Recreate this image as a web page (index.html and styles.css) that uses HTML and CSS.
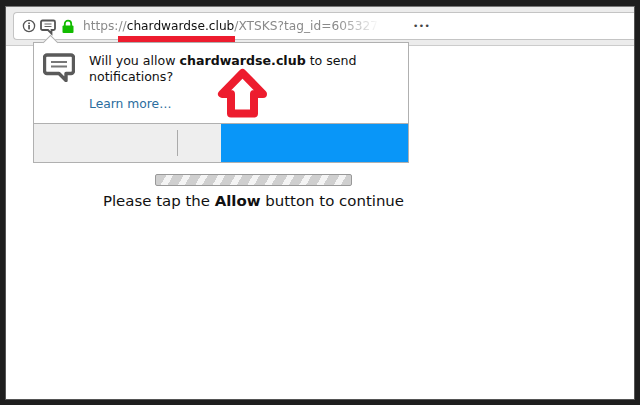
FILE: index.html
```html
<!DOCTYPE html>
<html lang="en">
<head>
    <meta charset="UTF-8">
    <meta name="viewport" content="width=device-width, initial-scale=1.0">
    <title>Notification prompt</title>
    <link rel="stylesheet" href="styles.css">
</head>
<body>
    <div class="window">
        <div class="toolbar">
            <div class="urlbar">
                <svg class="icon-info" width="14" height="14" viewBox="0 0 14 14">
                    <circle cx="7" cy="7" r="5.6" fill="none" stroke="#555" stroke-width="1.3"/>
                    <rect x="6.2" y="6" width="1.7" height="4.4" fill="#555"/>
                    <rect x="6.2" y="3.5" width="1.7" height="1.6" fill="#555"/>
                </svg>
                <svg class="icon-chat" width="16" height="17" viewBox="0 0 16 17">
                    <path d="M2.500 1.500h11a1.500 1.500 0 0 1 1.500 1.500v6.500a1.500 1.500 0 0 1-1.500 1.500h-2v3.500l-3.500-3.500h-5.500a1.500 1.500 0 0 1-1.500-1.500v-6.500a1.500 1.500 0 0 1 1.500-1.500z" fill="#fff" stroke="#555" stroke-width="1.800"/>
                    <path d="M4.500 5h7M4.500 7.500h7" stroke="#666" stroke-width="1.200"/>
                </svg>
                <svg class="icon-lock" width="14" height="15" viewBox="0 0 14 15">
                    <path d="M3.800 7V4.800a3.200 3.200 0 0 1 6.400 0V7" fill="none" stroke="#12bc00" stroke-width="1.800"/>
                    <rect x="1.500" y="6.500" width="11" height="7.500" rx="1" fill="#12bc00"/>
                </svg>
                <div class="url"><span class="url-scheme">https://</span><span class="url-host">chardwardse.club</span><span class="url-path">/XTSKS?tag_id=605327</span></div>
                <div class="more-dots">•••</div>
            </div>
        </div>
        <div class="content">
            <div class="progress"></div>
            <p class="hint">Please tap the <b>Allow</b> button to continue</p>
        </div>

        <div class="red-line"></div>

        <div class="popup">
            <div class="popup-body">
                <svg class="popup-icon" width="32" height="29" viewBox="0 0 32 29">
                    <path d="M4 2h24a2.500 2.500 0 0 1 2.500 2.500v13.500a2.500 2.500 0 0 1-2.500 2.500h-5v7l-7-7h-12a2.500 2.500 0 0 1-2.500-2.500v-13.500a2.500 2.500 0 0 1 2.500-2.500z" fill="#fff" stroke="#5a5a5a" stroke-width="3.400" stroke-linejoin="round"/>
                    <path d="M8 9h16M8 13.500h16" stroke="#777" stroke-width="1.800"/>
                </svg>
                <div class="popup-text">
                    <p class="popup-msg">Will you allow <b>chardwardse.club</b> to send notifications?</p>
                    <a class="learn-more">Learn more…</a>
                </div>
            </div>
            <div class="popup-buttons">
                <div class="btn-block">
                    <span class="btn-divider"></span>
                </div>
                <div class="btn-allow"></div>
            </div>
        </div>

        <svg class="red-arrow" width="52" height="51" viewBox="0 0 52 51">
            <path d="M25.500 5L5 26H14V45.500H37V26H46Z" fill="#fff" stroke="#ed1c2e" stroke-width="8" stroke-linejoin="round"/>
        </svg>
    </div>
</body>
</html>
```

FILE: styles.css
```css
html, body {
    margin: 0;
    height: 100%;
}

body {
    background: #1e1e1e;
    padding: 6px 5px 5px 5px;
    box-sizing: border-box;
    font-family: "DejaVu Sans", sans-serif;
    color: #111;
}

.window {
    position: relative;
    height: 100%;
    background: #fff;
    border-left: 1px solid #555;
    border-top: 1px solid #777;
    border-right: 1px solid #555;
    border-bottom: 1px solid #555;
    box-sizing: border-box;
    overflow: hidden;
}

.toolbar {
    background: #ececec;
    padding: 5px 0 5px 7px;
    border-bottom: 1px solid #ccc;
}

.urlbar {
    display: flex;
    align-items: center;
    height: 26px;
    background: #fff;
    border: 1px solid #c4c4c4;
    border-right: none;
    border-radius: 4px 0 0 4px;
    padding-left: 8px;
}

.icon-info {
    margin-right: 4px;
}

.icon-chat {
    margin: 2px 5px 0 0;
}

.url {
    margin-left: 8px;
    width: 296px;
    font-size: 12.2px;
    white-space: nowrap;
    overflow: hidden;
    -webkit-mask-image: linear-gradient(to right, #000 86%, transparent 100%);
}

.url-scheme, .url-path {
    color: #8a8a8a;
}

.more-dots {
    margin-left: 34px;
    font-size: 9px;
    letter-spacing: 0.5px;
    color: #444;
}

.content {
    width: 495px;
    padding-top: 128px;
    display: flex;
    flex-direction: column;
    align-items: center;
}

.progress {
    width: 195px;
    height: 10px;
    border: 1px solid #999;
    border-radius: 2px;
    background: repeating-linear-gradient(120deg, #cfcfcf 0, #cfcfcf 9px, #f4f4f4 9px, #f4f4f4 15px);
}

.hint {
    margin: 6px 0 0;
    font-size: 14.95px;
    line-height: 19px;
}

.red-line {
    position: absolute;
    left: 112px;
    top: 29px;
    width: 117px;
    height: 8px;
    background: #ed1c2e;
}

.popup {
    position: absolute;
    left: 27px;
    top: 35px;
    width: 374px;
    background: #fff;
    border: 1px solid #b0b0b0;
}

.popup::before {
    content: "";
    position: absolute;
    left: 11px;
    top: -6px;
    width: 10px;
    height: 10px;
    background: #fff;
    border-top: 1px solid #b0b0b0;
    border-left: 1px solid #b0b0b0;
    transform: rotate(45deg);
}

.popup-body {
    display: flex;
    height: 80px;
    padding: 10px 0 0 9px;
    box-sizing: border-box;
}

.popup-icon {
    flex: none;
}

.popup-text {
    margin-left: 14px;
    width: 300px;
    font-size: 12.6px;
    line-height: 16px;
}

.popup-msg {
    margin: 0 0 11px;
}

.learn-more {
    color: #2a6d9e;
    font-size: 12.3px;
}

.popup-buttons {
    display: flex;
    height: 38px;
    border-top: 1px solid #b0b0b0;
}

.btn-block {
    width: 187px;
    background: #eee;
    display: flex;
    align-items: center;
    justify-content: flex-end;
    padding-right: 43px;
    box-sizing: border-box;
}

.btn-divider {
    width: 1px;
    height: 26px;
    background: #aaa;
}

.btn-allow {
    flex: 1;
    background: #0996f8;
}

.red-arrow {
    position: absolute;
    left: 211px;
    top: 61px;
}
```
